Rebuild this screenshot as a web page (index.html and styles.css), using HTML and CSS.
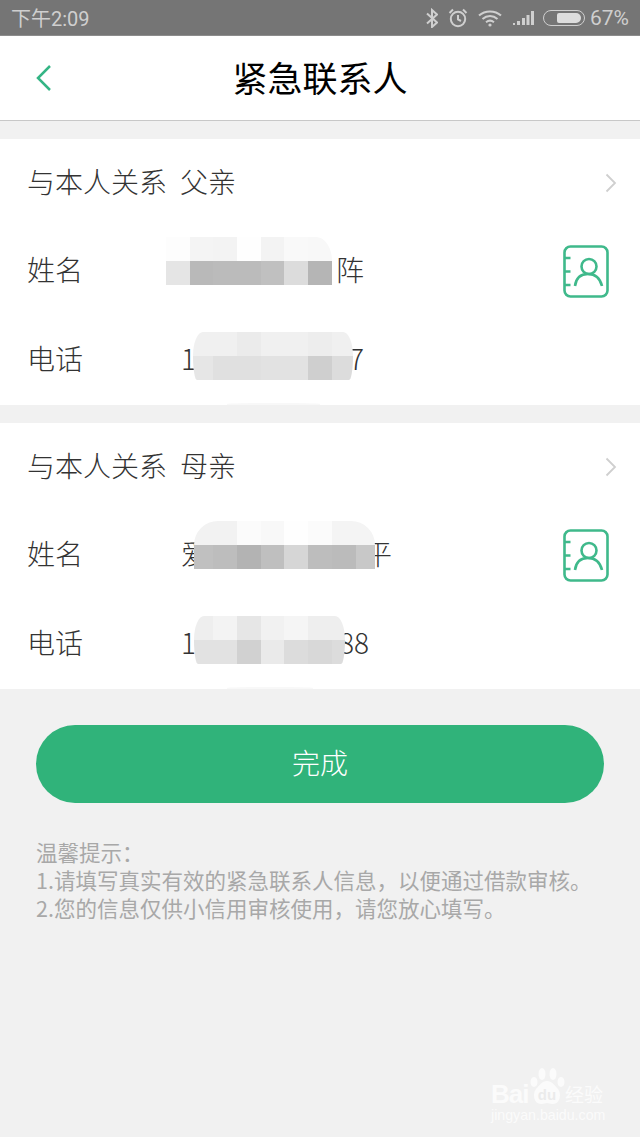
FILE: index.html
```html
<!DOCTYPE html>
<html lang="zh-CN">
<head>
    <meta charset="UTF-8">
    <meta name="viewport" content="width=device-width, initial-scale=1.0">
    <title>紧急联系人</title>
    <link rel="stylesheet" href="styles.css">
</head>
<body>
    <div class="status-bar">
        <span class="status-time">下午2:09</span>
        <div class="status-icons">
            <svg class="st-bt" viewBox="0 0 12 20"><path d="M1 5.500l10 9-5 4.500v-17l5 4.500-10 9"/></svg>
            <svg class="st-alarm" viewBox="0 0 20 20"><circle cx="10" cy="11" r="7.200"/><path d="M10 7v4.500l3 1.500M1.500 5L5 1.500M18.500 5L15 1.500"/></svg>
            <svg class="st-wifi" viewBox="0 0 24 18"><path d="M1 6.500C7 1 17 1 23 6.500M4.500 10C9 6 15 6 19.500 10M8 13.200c2.500-2 5.500-2 8 0"/><circle class="fill" cx="12" cy="16" r="1.600"/></svg>
            <svg class="st-signal" viewBox="0 0 21 14"><path class="fill" d="M0 12h2v2H0zM4 10h3v4H4zM9 7h3v7H9zM13.500 4h3v10h-3zM18 0h3v14h-3z"/></svg>
            <div class="battery"><div class="battery-level"></div></div>
            <span class="status-pct">67%</span>
        </div>
    </div>

    <header class="top-bar">
        <svg class="back-icon" viewBox="0 0 16 28"><path d="M14 2L2 14l12 12"/></svg>
        <h1>紧急联系人</h1>
    </header>

    <section class="card">
        <div class="row">
            <span class="label">与本人关系</span>
            <span class="relation">父亲</span>
            <svg class="arrow-icon" viewBox="0 0 12 20"><path d="M1.500 1.500L10 10l-8.500 8.500"/></svg>
        </div>
        <div class="row">
            <span class="label short">姓名</span>
            <div class="value name-a"><span></span><span>阵</span></div>
            <div class="mosaic mosaic-name-a">
                <i class="c-fd"></i><i class="c-f4"></i><i class="c-f3"></i><i class="c-fe"></i><i class="c-f3"></i><i class="c-f9"></i><i class="c-f8"></i>
                <i class="c-e5"></i><i class="c-b9"></i><i class="c-bb"></i><i class="c-bb"></i><i class="c-c0"></i><i class="c-dc"></i><i class="c-b5"></i>
            </div>
            <svg class="book-icon" viewBox="0 0 46 53"><rect x="1.500" y="1.500" width="43" height="50" rx="6"/><path d="M1.500 13h6M1.500 26.500h6M1.500 40h6M12 41c1-8 6-12 13-12s12 4 14 12"/><circle cx="26" cy="21.500" r="7.500"/></svg>
        </div>
        <div class="row">
            <span class="label short">电话</span>
            <div class="value phone-a"><span>1</span><span>7</span></div>
            <div class="mosaic mosaic-phone-a">
                <i class="c-f0"></i><i class="c-f0"></i><i class="c-eb"></i><i class="c-f0"></i><i class="c-f0"></i><i class="c-ed"></i><i class="c-f0"></i>
                <i class="c-e6"></i><i class="c-e0"></i><i class="c-e0"></i><i class="c-e2"></i><i class="c-e2"></i><i class="c-cf"></i><i class="c-dc"></i>
            </div>
            <div class="smudge smudge-a"></div>
        </div>
    </section>

    <section class="card">
        <div class="row">
            <span class="label">与本人关系</span>
            <span class="relation">母亲</span>
            <svg class="arrow-icon" viewBox="0 0 12 20"><path d="M1.500 1.500L10 10l-8.500 8.500"/></svg>
        </div>
        <div class="row">
            <span class="label short">姓名</span>
            <div class="value name-b"><span>爱</span><span>平</span></div>
            <div class="mosaic mosaic-name-b">
                <i class="c-f2"></i><i class="c-f2"></i><i class="c-fb"></i><i class="c-f8"></i><i class="c-fe"></i><i class="c-fb"></i><i class="c-f4"></i><i class="c-f4"></i>
                <i class="c-c0"></i><i class="c-bd"></i><i class="c-b3"></i><i class="c-bf"></i><i class="c-d6"></i><i class="c-bd"></i><i class="c-bb"></i><i class="c-c8"></i>
            </div>
            <svg class="book-icon" viewBox="0 0 46 53"><rect x="1.500" y="1.500" width="43" height="50" rx="6"/><path d="M1.500 13h6M1.500 26.500h6M1.500 40h6M12 41c1-8 6-12 13-12s12 4 14 12"/><circle cx="26" cy="21.500" r="7.500"/></svg>
        </div>
        <div class="row">
            <span class="label short">电话</span>
            <div class="value phone-b"><span>1</span><span>88</span></div>
            <div class="mosaic mosaic-phone-b">
                <i class="c-ee"></i><i class="c-f3"></i><i class="c-e6"></i><i class="c-f1"></i><i class="c-f5"></i><i class="c-ee"></i><i class="c-ee"></i>
                <i class="c-e2"></i><i class="c-e2"></i><i class="c-d1"></i><i class="c-ea"></i><i class="c-dc"></i><i class="c-d8"></i><i class="c-dc"></i>
            </div>
            <div class="smudge smudge-b"></div>
        </div>
    </section>

    <div class="actions">
        <button class="done-btn">完成</button>
    </div>

    <div class="tips">
        <p>温馨提示：</p>
        <p>1.请填写真实有效的紧急联系人信息，以便通过借款审核。</p>
        <p>2.您的信息仅供小信用审核使用，请您放心填写。</p>
    </div>

    <div class="watermark">
        <div class="wm-top">
            <span class="wm-bai">Bai</span>
            <svg class="wm-paw" viewBox="0 0 36 37">
                <ellipse cx="5" cy="14" rx="3.500" ry="5"/>
                <ellipse cx="13" cy="6" rx="3.500" ry="6"/>
                <ellipse cx="24" cy="6" rx="3.500" ry="6"/>
                <ellipse cx="32" cy="14" rx="3.500" ry="5"/>
                <path d="M18 13c-5 0-7 4-11 8-4 5-2 16 6 15 2 0 3-1 5-1s3 1 5 1c8 1 10-10 6-15-4-4-6-8-11-8z"/>
                <text class="wm-du" x="18" y="32">du</text>
            </svg>
            <span class="wm-cn">经验</span>
        </div>
        <div class="wm-url">jingyan.baidu.com</div>
    </div>
</body>
</html>
```

FILE: styles.css
```css
* {
    margin: 0;
    padding: 0;
    box-sizing: border-box;
}

body {
    position: relative;
    width: 640px;
    height: 1137px;
    overflow: hidden;
    background-color: #f1f1f1;
    font-family: "Noto Sans CJK SC", "Noto Sans", sans-serif;
    color: #333;
}

/* Status bar */
.status-bar {
    display: flex;
    justify-content: space-between;
    align-items: center;
    height: 36px;
    padding: 0 11px;
    background-color: #757575;
    border-bottom: 1px solid #8c8c8c;
    color: #cfcfcf;
    font-family: Roboto, "Noto Sans CJK SC", sans-serif;
    font-size: 20px;
}

.status-icons {
    display: flex;
    align-items: center;
}

.status-icons svg {
    fill: none;
    stroke: #cfcfcf;
    stroke-width: 2;
}

.status-icons svg .fill {
    fill: #cfcfcf;
    stroke: none;
}

.st-bt {
    width: 12px;
    height: 20px;
}

.st-alarm {
    width: 20px;
    height: 20px;
    margin-left: 10px;
}

.st-wifi {
    width: 24px;
    height: 18px;
    margin-left: 10px;
}

.st-signal {
    width: 21px;
    height: 14px;
    margin-left: 11px;
}

.battery {
    display: flex;
    justify-content: flex-end;
    width: 42px;
    height: 16px;
    margin-left: 9px;
    padding: 2px 3px;
    border: 1px solid #cfcfcf;
    border-radius: 8px;
}

.battery-level {
    width: 24px;
    height: 100%;
    background-color: #ddd;
    border-radius: 2px 5px 5px 2px;
}

.status-pct {
    margin-left: 5px;
    font-size: 21px;
}

/* Header */
.top-bar {
    position: relative;
    display: flex;
    justify-content: center;
    align-items: center;
    height: 85px;
    padding-bottom: 4px;
    background-color: #fff;
    border-bottom: 1px solid #c8c8c8;
}

.top-bar h1 {
    font-size: 35px;
    font-weight: 400;
    color: #000;
}

.back-icon {
    position: absolute;
    left: 36px;
    top: 28px;
    width: 16px;
    height: 28px;
    fill: none;
    stroke: #34b585;
    stroke-width: 2.500;
}

/* Contact cards */
.card {
    margin-top: 18px;
    background-color: #fff;
}

.row {
    position: relative;
    display: flex;
    align-items: center;
    height: 88.670px;
    padding: 0 27px 5px;
    font-size: 28px;
    font-weight: 300;
}

.label.short {
    width: 154px;
}

.relation {
    margin-left: 13px;
}

.value {
    display: flex;
    justify-content: space-between;
}

.name-a,
.phone-a {
    width: 183px;
}

.name-b {
    width: 211px;
}

.phone-b {
    width: 188px;
}

.arrow-icon {
    position: absolute;
    right: 23px;
    top: 34px;
    width: 12px;
    height: 20px;
    fill: none;
    stroke: #cfcfcf;
    stroke-width: 1.800;
}

.book-icon {
    position: absolute;
    left: 563px;
    top: 17px;
    width: 46px;
    height: 53px;
    fill: none;
    stroke: #3fb98b;
    stroke-width: 2.600;
}

/* Blurred-out parts of the numbers */
.mosaic {
    position: absolute;
    display: grid;
    grid-auto-rows: 24px;
    height: 48px;
    overflow: hidden;
}

.mosaic-name-a {
    left: 166px;
    top: 9px;
    grid-template-columns: repeat(7, 23.700px);
    border-top-right-radius: 16px 24px;
}

.mosaic-phone-a {
    left: 193px;
    top: 16px;
    grid-template-columns: 20px repeat(5, 23.800px) 21px;
    border-radius: 10px 10px 4px 4px / 24px 24px 24px 24px;
}

.mosaic-name-b {
    left: 194px;
    top: 9.500px;
    grid-template-columns: 19px repeat(6, 23.800px) 19px;
    border-radius: 24px 24px 0 0 / 24px 24px 0 0;
}

.mosaic-phone-b {
    left: 194px;
    top: 16px;
    grid-template-columns: 19px repeat(5, 23.800px) 13px;
    border-radius: 10px 10px 4px 4px / 24px 24px 24px 24px;
}

.smudge {
    position: absolute;
    bottom: 0;
    height: 2px;
    background-color: #f8f8f8;
    border-radius: 50% 50% 0 0;
}

.smudge-a {
    left: 227px;
    width: 93px;
}

.smudge-b {
    left: 227px;
    width: 86px;
}

.c-fe { background-color: #fefefe; }
.c-fd { background-color: #fdfdfd; }
.c-fb { background-color: #fbfbfb; }
.c-f9 { background-color: #f9f9f9; }
.c-f8 { background-color: #f8f8f8; }
.c-f5 { background-color: #f5f5f5; }
.c-f4 { background-color: #f4f4f4; }
.c-f3 { background-color: #f3f3f3; }
.c-f2 { background-color: #f2f2f2; }
.c-f1 { background-color: #f1f1f1; }
.c-f0 { background-color: #f0f0f0; }
.c-ee { background-color: #eee; }
.c-ed { background-color: #ededed; }
.c-eb { background-color: #ebebeb; }
.c-ea { background-color: #eaeaea; }
.c-e6 { background-color: #e6e6e6; }
.c-e5 { background-color: #e5e5e5; }
.c-e2 { background-color: #e2e2e2; }
.c-e0 { background-color: #e0e0e0; }
.c-dc { background-color: #dcdcdc; }
.c-d8 { background-color: #d8d8d8; }
.c-d6 { background-color: #d6d6d6; }
.c-d1 { background-color: #d1d1d1; }
.c-cf { background-color: #cfcfcf; }
.c-c8 { background-color: #c8c8c8; }
.c-c0 { background-color: #c0c0c0; }
.c-bf { background-color: #bfbfbf; }
.c-bd { background-color: #bdbdbd; }
.c-bb { background-color: #bbb; }
.c-b9 { background-color: #b9b9b9; }
.c-b5 { background-color: #b5b5b5; }
.c-b3 { background-color: #b3b3b3; }

/* Button */
.actions {
    padding: 36px 36px 0;
}

.done-btn {
    display: block;
    width: 100%;
    height: 78px;
    padding-bottom: 4px;
    border: none;
    border-radius: 39px;
    background-color: #30b37a;
    color: #fff;
    font-family: inherit;
    font-size: 28px;
    font-weight: 300;
}

/* Tips */
.tips {
    padding: 35px 36px 0;
    font-size: 21.500px;
    line-height: 28px;
    color: #a8a8a8;
}

/* Watermark */
.watermark {
    position: absolute;
    left: 491px;
    top: 1068px;
    width: 116px;
    color: #fbfbfb;
}

.wm-top {
    display: flex;
    align-items: flex-end;
    height: 37px;
}

.wm-bai {
    width: 38px;
    font-family: "Liberation Sans", sans-serif;
    font-size: 26px;
    font-weight: 700;
    line-height: 22px;
    letter-spacing: -1px;
}

.wm-paw {
    width: 36px;
    height: 37px;
    fill: #fbfbfb;
}

.wm-du {
    fill: #ebebeb;
    font-family: "Liberation Sans", sans-serif;
    font-size: 15px;
    font-weight: 700;
    text-anchor: middle;
}

.wm-cn {
    font-size: 19px;
    line-height: 22px;
}

.wm-url {
    margin-top: 3px;
    font-family: "Liberation Sans", sans-serif;
    font-size: 14.200px;
    line-height: 14px;
    white-space: nowrap;
}
```
